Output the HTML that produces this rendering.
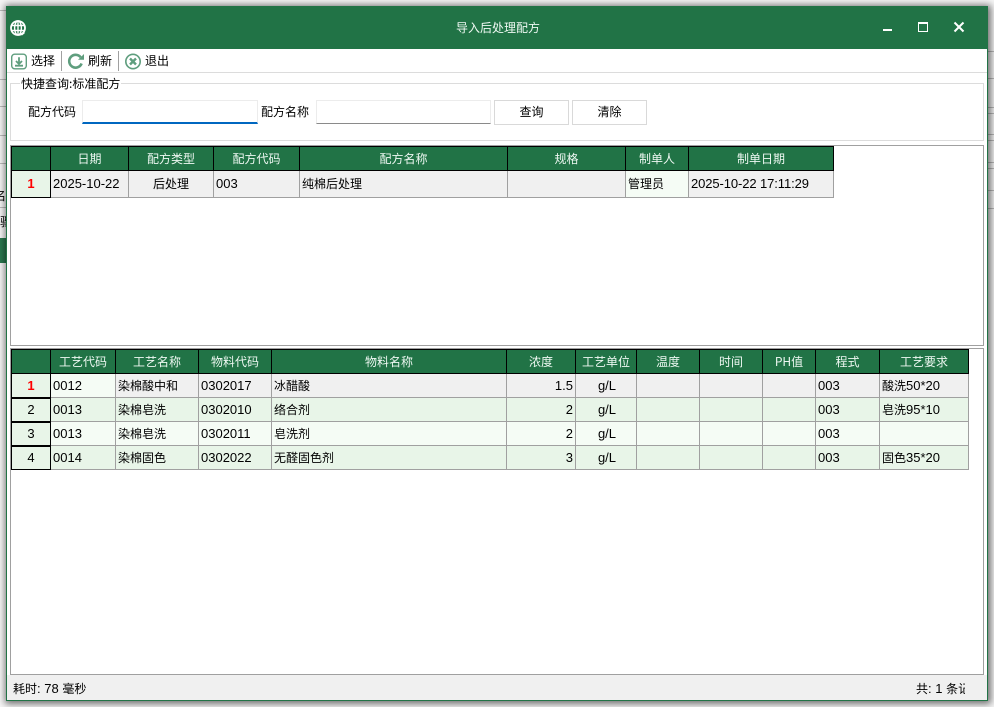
<!DOCTYPE html>
<html lang="zh">
<head>
<meta charset="utf-8">
<title>导入后处理配方</title>
<style>
*{box-sizing:border-box}
html,body{margin:0;padding:0}
body{width:994px;height:707px;position:relative;overflow:hidden;background:#f6f6f6;font-family:"Noto Sans CJK SC","Microsoft YaHei",sans-serif;font-size:12px;color:#000}
.a{position:absolute}
.t{position:absolute;white-space:nowrap;line-height:16px;height:16px}
.win{position:absolute;left:6px;top:6px;width:982px;height:695px;background:#fff;border:1px solid #217346;box-shadow:1px 1px 7px 2px rgba(0,0,0,.55)}
.title{position:absolute;left:6px;top:6px;width:982px;height:43px;background:#217346}
.sep{position:absolute;top:51px;width:1px;height:20px;background:#a0a0a0}
.bl{position:absolute;height:1px;background:#bbb}
table{position:absolute;border-collapse:separate;border-spacing:0;table-layout:fixed;font-size:12px}
td,th{padding:0 2px;overflow:hidden;white-space:nowrap;font-weight:normal;border-right:1px solid #a0a0a0;border-bottom:1px solid #a0a0a0;line-height:14px}
th{background:#217346;color:#eef8f2;text-align:center;border-right:1px solid #000;border-bottom:1px solid #000;border-top:1px solid #000;height:25px}
th:first-child{border-left:1px solid #000}
td.h{background:#e8f5e8;border-left:1px solid #000;border-right:1px solid #000;border-bottom:1px solid #000;box-shadow:inset 0 1px 0 #000;text-align:center;font-family:"Liberation Sans",sans-serif;font-size:13px}
td.h.r{color:#f00;font-weight:bold;box-shadow:none}
.n{font-family:"Liberation Sans","Noto Sans CJK SC",sans-serif;font-size:13px}
.c{text-align:center}.e{text-align:right}
.g0 td{background:#f0f0f0}
.g1 td{background:#e8f5e8}
.g2 td{background:#f5fcf5}
td.cur{background:#f5fcf5!important}
td.h{background:#e8f5e8!important}
</style>
</head>
<body>
<!-- background window remnants -->
<div class="bl" style="left:0;top:10px;width:6px"></div>
<div class="bl" style="left:0;top:79px;width:6px"></div>
<div class="bl" style="left:0;top:106px;width:6px"></div>
<div class="bl" style="left:0;top:135px;width:6px"></div>
<div class="bl" style="left:0;top:163px;width:6px"></div>
<div class="bl" style="left:0;top:207px;width:6px"></div>
<div class="a" style="left:0;top:188px;width:6px;height:16px;overflow:hidden"><span class="a" style="right:0;top:0;line-height:16px;white-space:nowrap">名</span></div>
<div class="a" style="left:0;top:214px;width:6px;height:16px;overflow:hidden"><span class="a" style="right:-6px;top:0;line-height:16px;white-space:nowrap">骤</span></div>
<div class="a" style="left:0;top:238px;width:6px;height:25px;background:#2a7a50"></div>
<div class="bl" style="left:988px;top:51px;width:6px"></div>
<div class="bl" style="left:988px;top:78px;width:6px"></div>
<div class="bl" style="left:988px;top:107px;width:6px"></div>
<div class="bl" style="left:988px;top:113px;width:6px"></div>
<div class="bl" style="left:988px;top:134px;width:6px"></div>
<div class="bl" style="left:988px;top:140px;width:6px"></div>
<div class="bl" style="left:988px;top:162px;width:6px"></div>
<div class="bl" style="left:988px;top:168px;width:6px"></div>
<div class="bl" style="left:988px;top:190px;width:6px"></div>
<div class="bl" style="left:988px;top:208px;width:6px"></div>
<div class="win"></div>
<div class="title"></div>
<svg class="a" style="left:9px;top:19px" width="18" height="18" viewBox="0 0 18 18" fill="none" stroke="#fff">
<circle cx="9" cy="9" r="7" stroke-width="1.8"/>
<ellipse cx="9" cy="9" rx="3.4" ry="7" stroke-width="1.4"/>
<path d="M2 6.5H16M2 11.5H16M9 2V16" stroke-width="1.4"/>
<path d="M11 14.5l3.5-1.5 1.5 1-3 2.5z" fill="#fff" stroke="none"/>
</svg>
<div class="t" style="left:456px;top:20px;color:#eef8f2">导入后处理配方</div>
<div class="a" style="left:883px;top:29px;width:9px;height:2px;background:#fff"></div>
<div class="a" style="left:918px;top:22px;width:10px;height:10px;border:1px solid #fff;border-top-width:2px"></div>
<svg class="a" style="left:953px;top:21px" width="12" height="12" viewBox="0 0 12 12"><path d="M1.5 1.5L10.5 10.5M10.5 1.5L1.5 10.5" stroke="#fff" stroke-width="2"/></svg>

<!-- toolbar -->
<svg class="a" style="left:11px;top:53px" width="16" height="17" viewBox="0 0 16 17" fill="none">
<rect x="0.7" y="1.2" width="14.6" height="14.6" rx="3" stroke="#5f9e7e" stroke-width="1.4"/>
<path d="M8 4.2V10.5M5 8l3 3 3-3M4 12.7H12" stroke="#5f9e7e" stroke-width="1.8"/>
</svg>
<div class="t" style="left:31px;top:53px">选择</div>
<div class="sep" style="left:61px"></div>
<svg class="a" style="left:67px;top:53px" width="18" height="17" viewBox="0 0 18 17" fill="none">
<path d="M13.6 4.2A6.4 6.4 0 1 0 14.6 10.5" stroke="#5f9e7e" stroke-width="2.6"/>
<path d="M11 6.8H17V1z" fill="#5f9e7e"/>
</svg>
<div class="t" style="left:88px;top:53px">刷新</div>
<div class="sep" style="left:118px"></div>
<svg class="a" style="left:124px;top:53px" width="18" height="17" viewBox="0 0 18 17" fill="none">
<circle cx="9" cy="8.5" r="7.2" stroke="#5f9e7e" stroke-width="1.6"/>
<path d="M6 5.5L12 11.5M12 5.5L6 11.5" stroke="#5f9e7e" stroke-width="2.4"/>
</svg>
<div class="t" style="left:145px;top:53px">退出</div>
<div class="a" style="left:7px;top:72px;width:980px;height:1px;background:#dcdcdc"></div>

<!-- group box -->
<div class="a" style="left:10px;top:83px;width:974px;height:58px;border:1px solid #dcdcdc"></div>
<div class="t" style="left:20px;top:76px;background:#fff;padding:0 1px">快捷查询:标准配方</div>
<div class="t" style="left:28px;top:104px">配方代码</div>
<div class="a" style="left:82px;top:100px;width:176px;height:24px;background:#fff;border:1px solid #ececec;border-bottom:2px solid #0067c0"></div>
<div class="t" style="left:261px;top:104px">配方名称</div>
<div class="a" style="left:316px;top:100px;width:175px;height:24px;background:#fff;border:1px solid #ececec;border-bottom:1px solid #8a8a8a"></div>
<div class="a" style="left:494px;top:100px;width:75px;height:25px;border:1px solid #d9d9d9;text-align:center;line-height:22px">查询</div>
<div class="a" style="left:572px;top:100px;width:75px;height:25px;border:1px solid #d9d9d9;text-align:center;line-height:22px">清除</div>

<!-- grid 1 -->
<div class="a" style="left:10px;top:145px;width:974px;height:201px;border:1px solid #a0a0a0;background:#fff"></div>
<table style="left:11px;top:146px;width:823px">
<colgroup><col style="width:40px"><col style="width:78px"><col style="width:85px"><col style="width:86px"><col style="width:208px"><col style="width:118px"><col style="width:63px"><col style="width:145px"></colgroup>
<tr><th></th><th>日期</th><th>配方类型</th><th>配方代码</th><th>配方名称</th><th>规格</th><th>制单人</th><th>制单日期</th></tr>
<tr class="g0" style="height:27px"><td class="h r">1</td><td class="n">2025-10-22</td><td class="c">后处理</td><td class="n">003</td><td>纯棉后处理</td><td></td><td class="cur">管理员</td><td class="n" style="letter-spacing:-.1px">2025-10-22 17:11:29</td></tr>
</table>

<!-- grid 2 -->
<div class="a" style="left:10px;top:348px;width:974px;height:327px;border:1px solid #a0a0a0;background:#fff"></div>
<table style="left:11px;top:349px;width:958px">
<colgroup><col style="width:40px"><col style="width:65px"><col style="width:83px"><col style="width:73px"><col style="width:235px"><col style="width:69px"><col style="width:61px"><col style="width:63px"><col style="width:63px"><col style="width:53px"><col style="width:64px"><col style="width:89px"></colgroup>
<tr><th></th><th>工艺代码</th><th>工艺名称</th><th>物料代码</th><th>物料名称</th><th>浓度</th><th>工艺单位</th><th>温度</th><th>时间</th><th>PH值</th><th>程式</th><th>工艺要求</th></tr>
<tr class="g0" style="height:24px"><td class="h r">1</td><td class="n cur">0012</td><td>染棉酸中和</td><td class="n">0302017</td><td>冰醋酸</td><td class="n e">1.5</td><td class="n c" style="padding-left:4px">g/L</td><td></td><td></td><td></td><td class="n">003</td><td>酸洗<span class="n">50*20</span></td></tr>
<tr class="g1" style="height:24px"><td class="h">2</td><td class="n">0013</td><td>染棉皂洗</td><td class="n">0302010</td><td>络合剂</td><td class="n e">2</td><td class="n c" style="padding-left:4px">g/L</td><td></td><td></td><td></td><td class="n">003</td><td>皂洗<span class="n">95*10</span></td></tr>
<tr class="g2" style="height:24px"><td class="h">3</td><td class="n">0013</td><td>染棉皂洗</td><td class="n">0302011</td><td>皂洗剂</td><td class="n e">2</td><td class="n c" style="padding-left:4px">g/L</td><td></td><td></td><td></td><td class="n">003</td><td></td></tr>
<tr class="g1" style="height:24px"><td class="h">4</td><td class="n">0014</td><td>染棉固色</td><td class="n">0302022</td><td>无醛固色剂</td><td class="n e">3</td><td class="n c" style="padding-left:4px">g/L</td><td></td><td></td><td></td><td class="n">003</td><td>固色<span class="n">35*20</span></td></tr>
</table>

<!-- status bar -->
<div class="a" style="left:7px;top:675px;width:980px;height:25px;background:#f0f0f0"></div>
<div class="t" style="left:13px;top:681px">耗时<span class="n">: 78 </span>毫秒</div>
<div class="t" style="left:916px;top:681px;width:49px;overflow:hidden">共<span class="n">: 1 </span>条记录</div>
</body>
</html>
